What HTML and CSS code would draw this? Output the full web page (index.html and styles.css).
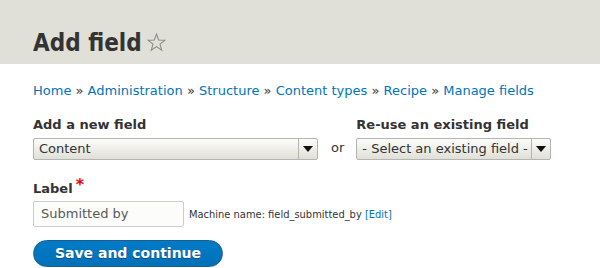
FILE: index.html
```html
<!DOCTYPE html>
<html>
<head>
<meta charset="utf-8">
<link rel="stylesheet" href="styles.css">
</head>
<body>
<header class="page-head">
  <h1 class="title">Add field <svg class="star" width="19" height="19" viewBox="0 0 20 20"><path d="M10 1.2 L12.3 7.4 L18.9 7.6 L13.7 11.7 L15.5 18.1 L10 14.4 L4.5 18.1 L6.3 11.7 L1.1 7.6 L7.7 7.4 Z" fill="none" stroke="#8a8a80" stroke-width="1.1" stroke-linejoin="miter"/></svg></h1>
</header>
<main class="content">
  <nav class="breadcrumb"><a>Home</a> » <a>Administration</a> » <a>Structure</a> » <a>Content types</a> » <a>Recipe</a> » <a>Manage fields</a></nav>
  <div class="row">
    <div class="field">
      <div class="label">Add a new field</div>
      <div class="select wide"><span class="val">Content</span><span class="arrow"></span></div>
    </div>
    <div class="or">or</div>
    <div class="field">
      <div class="label">Re-use an existing field</div>
      <div class="select narrow"><span class="val">- Select an existing field -</span><span class="arrow"></span></div>
    </div>
  </div>
  <div class="label-row">
    <div class="label">Label<span class="req">*</span></div>
    <div class="input-row">
      <div class="input">Submitted by</div>
      <span class="machine">Machine name: field_submitted_by <a>[Edit]</a></span>
    </div>
  </div>
  <div class="button">Save and continue</div>
</main>
</body>
</html>
```

FILE: styles.css
```css
html, body { margin: 0; padding: 0; background: #fff; }
body { font-family: "DejaVu Sans", sans-serif; font-size: 13px; color: #333; }
.page-head { background: #e0e0d8; height: 64px; box-sizing: border-box; padding: 30px 33px 0; }
.title { margin: 0; font-family: "DejaVu Sans Condensed", "DejaVu Sans", sans-serif; font-size: 24px; font-weight: bold; color: #333; line-height: 26px; display: flex; align-items: center; gap: 5px; }
.star { margin-top: -2px; }
.content { padding: 17px 33px 0; }
.breadcrumb { color: #333; line-height: 20px; height: 20px; }
.breadcrumb a { color: #0074bd; }
.row { display: flex; align-items: flex-start; margin-top: 16px; }
.label { font-weight: bold; line-height: 16px; height: 16px; margin-bottom: 5px; }
.select { display: flex; height: 22px; box-sizing: border-box; border: 1px solid #b4b4b4; border-radius: 2px; background: linear-gradient(#fcfcfa, #e0e0d8); color: #333; font-size: 13px; line-height: 20px; }
.select .val { flex: 1; padding-left: 5px; white-space: nowrap; overflow: hidden; }
.select .arrow { width: 18px; border-left: 1px solid #b4b4b4; position: relative; }
.select .arrow::after { content: ""; position: absolute; left: 4px; top: 7px; border-left: 5px solid transparent; border-right: 5px solid transparent; border-top: 6px solid #111; }
.wide { width: 285px; }
.narrow { width: 195px; }
.or { margin: 23px 12px 0 13px; line-height: 16px; }
.label-row { margin-top: 20px; }
.req { color: #e00; margin-left: 3px; font-size: 16px; position: relative; top: -3px; }
.input-row { display: flex; align-items: center; gap: 5px; margin-top: 0; }
.input { width: 151px; height: 26px; box-sizing: border-box; border: 1px solid #ccc; border-radius: 2px; background: #fcfcfa; color: #595959; padding-left: 7px; line-height: 24px; font-size: 13px; }
.machine { font-size: 11px; color: #333; font-family: "DejaVu Sans Condensed", "DejaVu Sans", sans-serif; }
.machine a { color: #0074bd; }
.button { margin-top: 13px; width: 190px; height: 27px; box-sizing: border-box; border: 1px solid #1e5c90; border-radius: 14px; background: linear-gradient(#007bc6, #0071b8); color: #fff; font-weight: bold; font-size: 14px; text-align: center; line-height: 25px; text-shadow: 0 1px #1f4d7a; }
```
